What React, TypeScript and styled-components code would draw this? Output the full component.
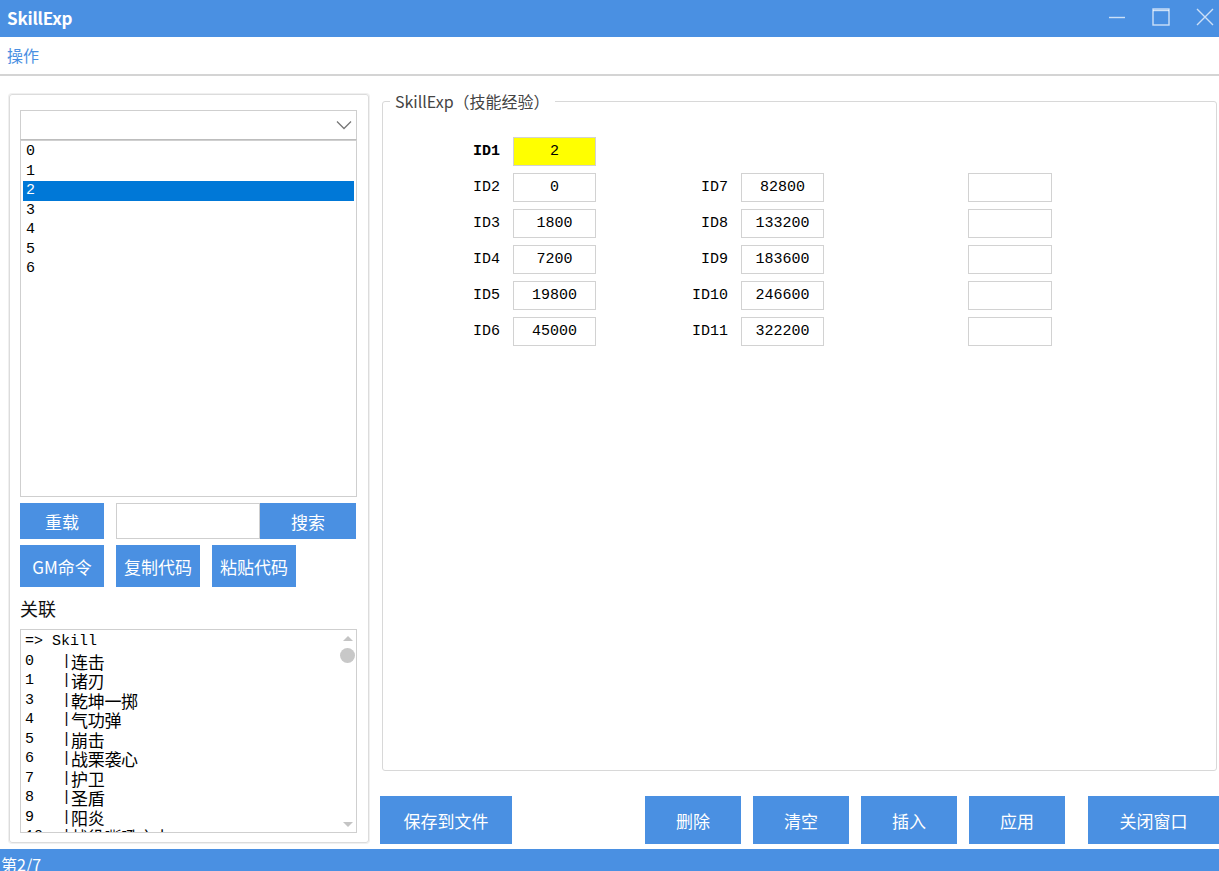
import React from "react";
import styled, { createGlobalStyle } from "styled-components";

const GlobalStyle = createGlobalStyle`
  html, body {
    margin: 0;
    padding: 0;
    background: #ffffff;
  }
  * {
    box-sizing: border-box;
  }
`;

const ui = `"Noto Sans CJK SC", "Noto Sans", sans-serif`;
const mono = `"Liberation Mono", "Noto Sans CJK SC", monospace`;
const blue = "#4a90e2";

const ids = [0, 1, 2, 3, 4, 5, 6];

const relations = [
  ["0", "连击"],
  ["1", "诸刃"],
  ["3", "乾坤一掷"],
  ["4", "气功弹"],
  ["5", "崩击"],
  ["6", "战栗袭心"],
  ["7", "护卫"],
  ["8", "圣盾"],
  ["9", "阳炎"],
  ["10", "战役嘶吼之力"],
];

const leftCol = [
  ["ID2", "0"],
  ["ID3", "1800"],
  ["ID4", "7200"],
  ["ID5", "19800"],
  ["ID6", "45000"],
];

const midCol = [
  ["ID7", "82800"],
  ["ID8", "133200"],
  ["ID9", "183600"],
  ["ID10", "246600"],
  ["ID11", "322200"],
];

const App = () => {
  return (
    <Window>
      <GlobalStyle />
      <TitleBar>
        <Title>SkillExp</Title>
        <Controls>
          <Control>
            <svg width="18" height="18" viewBox="0 0 18 18">
              <line x1="1" y1="9.5" x2="17" y2="9.5" stroke="currentColor" strokeWidth="1.4" />
            </svg>
          </Control>
          <Control>
            <svg width="18" height="18" viewBox="0 0 18 18">
              <rect x="1" y="1" width="16" height="16" fill="none" stroke="currentColor" strokeWidth="1.4" />
              <line x1="1" y1="2.5" x2="17" y2="2.5" stroke="currentColor" strokeWidth="1.4" />
            </svg>
          </Control>
          <Control>
            <svg width="18" height="18" viewBox="0 0 18 18">
              <path d="M1 1L17 17M17 1L1 17" stroke="currentColor" strokeWidth="1.4" />
            </svg>
          </Control>
        </Controls>
      </TitleBar>

      <MenuBar>
        <MenuItem>操作</MenuItem>
      </MenuBar>

      <Main>
        <LeftGroup>
          <Combo>
            <svg width="16" height="10" viewBox="0 0 16 10">
              <path d="M1 1.5L8 8.5L15 1.5" fill="none" stroke="#777" strokeWidth="1.3" />
            </svg>
          </Combo>
          <IdList>
            {ids.map((n) => (
              <IdItem key={n} selected={n === 2}>
                {n}
              </IdItem>
            ))}
          </IdList>

          <ButtonRow>
            <SmallButton>重载</SmallButton>
            <SearchBox />
            <SearchButton>搜索</SearchButton>
          </ButtonRow>
          <ButtonRow tall>
            <SmallButton>GM命令</SmallButton>
            <SmallButton>复制代码</SmallButton>
            <SmallButton>粘贴代码</SmallButton>
          </ButtonRow>

          <SectionLabel>关联</SectionLabel>
          <RelationBox>
            <RelationText>
              <RelLine>=&gt; Skill</RelLine>
              {relations.map(([n, name]) => (
                <RelLine key={n}>
                  <RelNum>{n}</RelNum>
                  <span>|</span>
                  <RelName>{name}</RelName>
                </RelLine>
              ))}
            </RelationText>
            <ScrollBar>
              <Arrow up />
              <Thumb />
              <Spacer />
              <Arrow />
            </ScrollBar>
          </RelationBox>
        </LeftGroup>

        <RightCol>
          <Group>
            <Legend>SkillExp（技能经验）</Legend>
            <FieldGrid>
              <FieldLabel bold>ID1</FieldLabel>
              <Field highlight>2</Field>
              <Empty />
              <Empty />
              <Empty />
              <Empty />
              {leftCol.map(([l, v], i) => (
                <React.Fragment key={l}>
                  <FieldLabel>{l}</FieldLabel>
                  <Field>{v}</Field>
                  <FieldLabel>{midCol[i][0]}</FieldLabel>
                  <Field>{midCol[i][1]}</Field>
                  <Empty />
                  <Field />
                </React.Fragment>
              ))}
            </FieldGrid>
          </Group>

          <BottomBar>
            <BigButton width={132}>保存到文件</BigButton>
            <BigButton width={96} push>删除</BigButton>
            <BigButton width={96}>清空</BigButton>
            <BigButton width={96}>插入</BigButton>
            <BigButton width={96}>应用</BigButton>
            <CloseButton width={131}>关闭窗口</CloseButton>
          </BottomBar>
        </RightCol>
      </Main>

      <StatusBar>第2/7</StatusBar>
    </Window>
  );
};

export default App;

const Window = styled.div`
  width: 1219px;
  height: 871px;
  display: flex;
  flex-direction: column;
  overflow: hidden;
  font-family: ${ui};
  background: #fff;
`;

const TitleBar = styled.div`
  height: 37px;
  flex: none;
  background: ${blue};
  display: flex;
  align-items: center;
  justify-content: space-between;
  padding-left: 7px;
`;

const Title = styled.div`
  color: #fff;
  font-weight: 700;
  font-size: 17px;
  letter-spacing: -0.2px;
  margin-top: -3px;
`;

const Controls = styled.div`
  display: flex;
  gap: 16px;
  height: 100%;
`;

const Control = styled.div`
  width: 28px;
  height: 100%;
  display: flex;
  align-items: center;
  justify-content: center;
  padding-bottom: 4px;
  color: rgba(255, 255, 255, 0.72);
`;

const MenuBar = styled.div`
  height: 39px;
  flex: none;
  border-bottom: 2px solid #d4d4d4;
  display: flex;
  align-items: center;
  padding-left: 7px;
`;

const MenuItem = styled.div`
  color: ${blue};
  font-size: 16px;
  margin-top: -2px;
`;

const Main = styled.div`
  flex: 1;
  display: flex;
  min-height: 0;
`;

const LeftGroup = styled.div`
  margin: 18px 0 0 9px;
  width: 360px;
  height: 749px;
  border: 1px solid #dcdcdc;
  border-radius: 3px;
  box-shadow: 0 0 0 1px #f0f0f0;
  padding: 15px 11px 9px 10px;
  display: flex;
  flex-direction: column;
`;

const Combo = styled.div`
  height: 30px;
  flex: none;
  border: 1px solid #cfcfcf;
  border-bottom-color: #bdbdbd;
  display: flex;
  align-items: center;
  justify-content: flex-end;
  padding-right: 4px;
`;

const IdList = styled.div`
  height: 357px;
  flex: none;
  border: 1px solid #cfcfcf;
  padding: 1px 2px;
  font-family: ${mono};
  font-size: 15px;
`;

const IdItem = styled.div<{ selected?: boolean }>`
  height: 19.5px;
  line-height: 19.5px;
  padding-left: 3px;
  color: ${(p) => (p.selected ? "#fff" : "#000")};
  background: ${(p) => (p.selected ? "#0078d7" : "transparent")};
`;

const ButtonRow = styled.div<{ tall?: boolean }>`
  margin-top: 6px;
  height: ${(p) => (p.tall ? 42 : 36)}px;
  flex: none;
  display: flex;
  gap: 12px;
`;

const SmallButton = styled.div`
  width: 84px;
  background: ${blue};
  color: #fff;
  font-size: 17px;
  display: flex;
  align-items: center;
  justify-content: center;
  white-space: nowrap;
`;

const SearchBox = styled.div`
  width: 144px;
  margin-right: -12px;
  border: 1px solid #cfcfcf;
`;

const SearchButton = styled(SmallButton)`
  width: 96px;
`;

const SectionLabel = styled.div`
  height: 42px;
  flex: none;
  font-size: 18px;
  color: #111;
  padding-top: 9px;
  line-height: 24px;
`;

const RelationBox = styled.div`
  flex: 1;
  min-height: 0;
  border: 1px solid #cfcfcf;
  display: flex;
  overflow: hidden;
`;

const RelationText = styled.div`
  flex: 1;
  padding: 2px 0 0 4px;
  overflow: hidden;
  font-family: ${mono};
  font-size: 15px;
  color: #000;
`;

const RelLine = styled.div`
  height: 19.5px;
  line-height: 19.5px;
  display: flex;
  align-items: center;
  white-space: pre;
  overflow: hidden;
`;

const RelNum = styled.span`
  width: 37px;
`;

const RelName = styled.span`
  font-family: "Noto Sans CJK SC", sans-serif;
  font-size: 17px;
  line-height: 19px;
  letter-spacing: -0.3px;
`;

const ScrollBar = styled.div`
  width: 17px;
  flex: none;
  display: flex;
  flex-direction: column;
  align-items: center;
  padding: 6px 0 5px;
`;

const Arrow = styled.div<{ up?: boolean }>`
  width: 0;
  height: 0;
  border-left: 5px solid transparent;
  border-right: 5px solid transparent;
  ${(p) => (p.up ? "border-bottom: 5px solid #c4c4c4;" : "border-top: 5px solid #c4c4c4;")}
`;

const Thumb = styled.div`
  margin-top: 7px;
  width: 15px;
  height: 15px;
  border-radius: 50%;
  background: #c8c8c8;
`;

const Spacer = styled.div`
  flex: 1;
`;

const RightCol = styled.div`
  margin-left: 11px;
  width: 839px;
  padding-top: 15px;
  padding-bottom: 5px;
  display: flex;
  flex-direction: column;
`;

const Group = styled.fieldset`
  flex: 1;
  min-width: 0;
  margin: 0 2px 0 2px;
  padding: 0;
  border: 1px solid #d8d8d8;
  border-radius: 3px;
`;

const Legend = styled.legend`
  margin-left: 7px;
  padding: 0 5px;
  font-size: 16px;
  line-height: 20px;
  color: #444;
`;

const FieldGrid = styled.div`
  display: grid;
  grid-template-columns: 80px 83px 119px 83px 118px 84px;
  grid-auto-rows: 29px;
  column-gap: 13px;
  row-gap: 7px;
  padding: 26px 0 0 37px;
`;

const FieldLabel = styled.div<{ bold?: boolean }>`
  text-align: right;
  font-family: ${mono};
  font-size: 15px;
  font-weight: ${(p) => (p.bold ? 700 : 400)};
  line-height: 29px;
  color: #000;
`;

const Field = styled.div<{ highlight?: boolean }>`
  border: 1px solid #d2d2d2;
  background: ${(p) => (p.highlight ? "#ffff00" : "#fff")};
  font-family: ${mono};
  font-size: 15px;
  line-height: 27px;
  text-align: center;
  color: #000;
`;

const Empty = styled.div``;

const BottomBar = styled.div`
  margin-top: 25px;
  height: 48px;
  flex: none;
  display: flex;
  gap: 12px;
`;

const BigButton = styled.div<{ width: number; push?: boolean }>`
  width: ${(p) => p.width}px;
  flex: none;
  margin-left: ${(p) => (p.push ? "auto" : "0")};
  background: ${blue};
  color: #fff;
  font-size: 17px;
  display: flex;
  align-items: center;
  justify-content: center;
  white-space: nowrap;
`;

const CloseButton = styled(BigButton)`
  margin-left: 11px;
`;

const StatusBar = styled.div`
  height: 22px;
  flex: none;
  background: ${blue};
  color: #fff;
  font-size: 16px;
  line-height: 22px;
  padding: 4px 0 0 1px;
  overflow: hidden;
`;
